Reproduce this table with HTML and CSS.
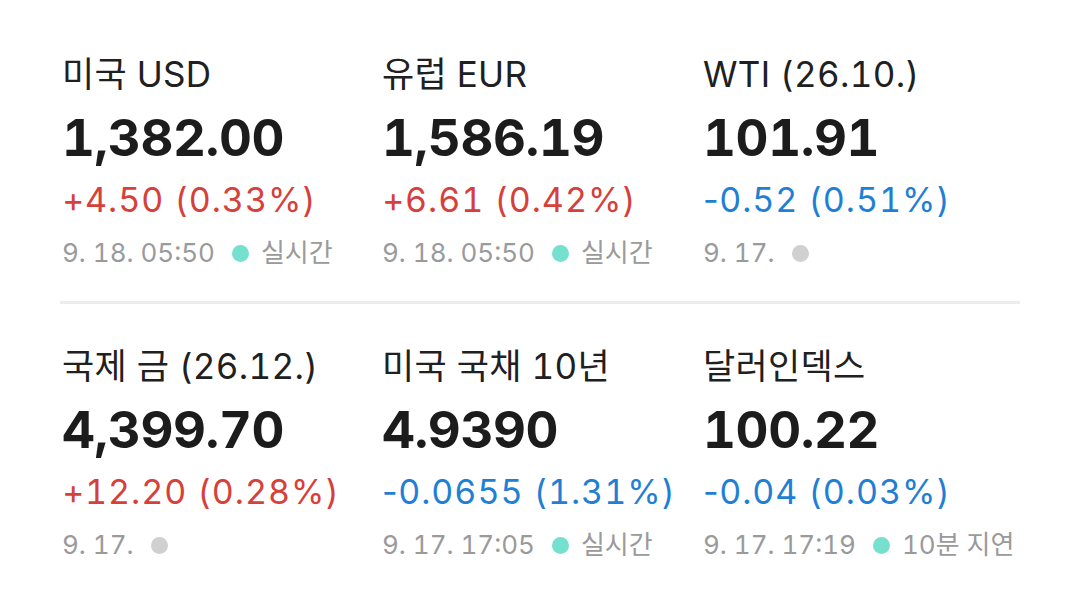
FILE: index.html
```html
<!DOCTYPE html>
<html lang="ko">
<head>
<meta charset="utf-8">
<link rel="stylesheet" href="styles.css">
</head>
<body>
<main class="board">
  <section class="row">
    <div class="item">
      <div class="name">미국 USD</div>
      <div class="price">1,382.00</div>
      <div class="change up"><span class="sign">+</span>4.50 (0.33%)</div>
      <div class="meta"><span>9. 18. 05:50</span><span class="dot live"></span><span>실시간</span></div>
    </div>
    <div class="item">
      <div class="name">유럽 EUR</div>
      <div class="price">1,586.19</div>
      <div class="change up"><span class="sign">+</span>6.61 (0.42%)</div>
      <div class="meta"><span>9. 18. 05:50</span><span class="dot live"></span><span>실시간</span></div>
    </div>
    <div class="item">
      <div class="name">WTI (26.10.)</div>
      <div class="price">101.91</div>
      <div class="change down"><span class="sign">-</span>0.52 (0.51%)</div>
      <div class="meta"><span>9. 17.</span><span class="dot off"></span></div>
    </div>
  </section>
  <hr class="divider">
  <section class="row">
    <div class="item">
      <div class="name">국제 금 (26.12.)</div>
      <div class="price">4,399.70</div>
      <div class="change up"><span class="sign">+</span>12.20 (0.28%)</div>
      <div class="meta"><span>9. 17.</span><span class="dot off"></span></div>
    </div>
    <div class="item">
      <div class="name">미국 국채 10년</div>
      <div class="price">4.9390</div>
      <div class="change down"><span class="sign">-</span>0.0655 (1.31%)</div>
      <div class="meta"><span>9. 17. 17:05</span><span class="dot live"></span><span>실시간</span></div>
    </div>
    <div class="item">
      <div class="name">달러인덱스</div>
      <div class="price">100.22</div>
      <div class="change down"><span class="sign">-</span>0.04 (0.03%)</div>
      <div class="meta"><span>9. 17. 17:19</span><span class="dot live"></span><span>10분 지연</span></div>
    </div>
  </section>
</main>
</body>
</html>
```
FILE: styles.css
```css
html, body {
  margin: 0;
  padding: 0;
  background: #ffffff;
}
body {
  font-family: Inter, "Noto Sans CJK KR", sans-serif;
  font-variant-numeric: tabular-nums;
  width: 1080px;
  height: 611px;
  overflow: hidden;
}
.board {
  padding: 50px 60px 0 62px;
}
.row {
  display: grid;
  grid-template-columns: 320px 321px 1fr;
}
.item {
  display: flex;
  flex-direction: column;
}
.name {
  font-size: 35px;
  line-height: 48px;
  color: #202020;
  letter-spacing: 0.3px;
  white-space: nowrap;
}
.price {
  font-size: 51px;
  font-weight: 700;
  line-height: 64px;
  color: #1c1c1c;
  margin-top: 8px;
  letter-spacing: -0.4px;
}
.change {
  font-size: 34px;
  line-height: 44px;
  margin-top: 8px;
  letter-spacing: 1px;
  white-space: nowrap;
}
.sign {
  font-variant-numeric: normal;
  letter-spacing: 0.5px;
}
.up { color: #d6403a; }
.down { color: #1f7fd4; }
.meta {
  font-size: 26px;
  line-height: 36px;
  color: #9a9a9a;
  margin-top: 13px;
  display: flex;
  align-items: center;
  letter-spacing: 0;
  white-space: nowrap;
}
.dot {
  display: block;
  width: 17px;
  height: 17px;
  border-radius: 50%;
  margin: 0 12px 0 17px;
}
.live { background: #74e0cd; }
.off { background: #d0d0d0; }
.divider {
  border: 0;
  height: 3px;
  background: #ececec;
  margin: 30px 0 38px -2px;
}
```
